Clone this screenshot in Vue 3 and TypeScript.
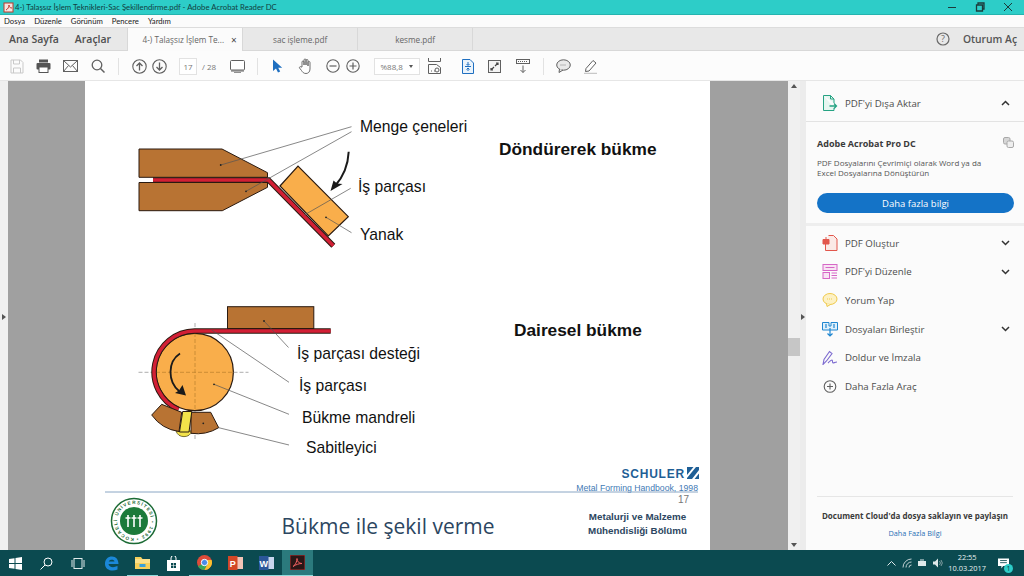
<template>
  <div class="app">
    <header class="title-bar">
      <svg class="pdf-mini" width="11" height="11" viewBox="0 0 11 11"><rect x="1" y="1" width="9" height="9" fill="#f4e4e0" stroke="#c0392b" stroke-width="1" /><path d="M3 8c2-1 3-3 3-5 0 2 1 3 3 3" fill="none" stroke="#c0392b" /></svg>
      <span class="title-text">4-) Talaşsız İşlem Teknikleri-Sac Şekillendirme.pdf - Adobe Acrobat Reader DC</span>
      <div class="win-controls">
        <svg width="10" height="10" viewBox="0 0 10 10"><path d="M1 5.500h8" stroke="#1c3b3b" /></svg>
        <svg width="10" height="10" viewBox="0 0 10 10"><path d="M1.500 3h6v6h-6zM3 3V1h6v6H7.500" fill="none" stroke="#1c3b3b" stroke-width="1.300" /></svg>
        <svg width="10" height="10" viewBox="0 0 10 10"><path d="M1 1l8 8M9 1l-8 8" stroke="#1c3b3b" /></svg>
      </div>
    </header>

    <nav class="menu-bar">
      <span v-for="item in menuItems" :key="item">{{ item }}</span>
    </nav>

    <div class="tab-bar">
      <a class="home-link first">Ana Sayfa</a>
      <a class="home-link">Araçlar</a>
      <div class="tab active">
        <span>4-) Talaşsız İşlem Te...</span>
        <span class="tab-close">×</span>
      </div>
      <div class="tab">sac işleme.pdf</div>
      <div class="tab">kesme.pdf</div>
      <div class="tab-actions">
        <svg width="14" height="14" viewBox="0 0 14 14"><circle cx="7" cy="7" r="6" fill="none" stroke="#6a6a6a" stroke-width="1.200" /><text x="7" y="10.200" text-anchor="middle" class="help-mark">?</text></svg>
        <span class="sign-in">Oturum Aç</span>
      </div>
    </div>

    <div class="toolbar">
      <div class="tb"><svg width="14" height="15" viewBox="0 0 14 15"><path d="M1 1h9.500l2.500 2.500V14H1z" fill="none" stroke="#c9c9c9" /><path d="M3.500 1v4h6V1M3.500 14V9h7v5" fill="none" stroke="#c9c9c9" /></svg></div>
      <div class="tb"><svg width="15" height="14" viewBox="0 0 15 14"><rect x="3" y="0.500" width="9" height="3" fill="#555" /><rect x="0.500" y="4" width="14" height="6.500" rx="1" fill="#555" /><rect x="3" y="8" width="9" height="5.500" fill="#fff" stroke="#555" /></svg></div>
      <div class="tb"><svg width="15" height="12" viewBox="0 0 15 12"><rect x="0.500" y="0.500" width="14" height="11" fill="none" stroke="#606060" /><path d="M0.500 0.500L7.500 7l7-6.500M0.500 11.500l5-6M14.500 11.500l-5-6" fill="none" stroke="#606060" /></svg></div>
      <div class="tb"><svg width="14" height="14" viewBox="0 0 14 14"><circle cx="6" cy="6" r="4.800" fill="none" stroke="#606060" stroke-width="1.300" /><path d="M9.500 9.500L13.500 13.500" stroke="#606060" stroke-width="1.500" /></svg></div>
      <div class="sep gap-a"></div>
      <div class="tb narrow gap-b"><svg width="15" height="15" viewBox="0 0 15 15"><circle cx="7.500" cy="7.500" r="6.700" fill="none" stroke="#606060" stroke-width="1.100" /><path d="M7.500 11.500V4M4.500 7l3-3 3 3" fill="none" stroke="#606060" stroke-width="1.300" /></svg></div>
      <div class="tb narrow"><svg width="15" height="15" viewBox="0 0 15 15"><circle cx="7.500" cy="7.500" r="6.700" fill="none" stroke="#606060" stroke-width="1.100" /><path d="M7.500 3.500V11M4.500 8l3 3 3-3" fill="none" stroke="#606060" stroke-width="1.300" /></svg></div>
      <div class="page-input">17</div>
      <span class="page-total">/ 28</span>
      <div class="tb gap-c"><svg width="15" height="13" viewBox="0 0 15 13"><rect x="0.500" y="0.500" width="14" height="9.500" rx="1" fill="#fff" stroke="#606060" /><path d="M1 10.500h13v1H1z" fill="#606060" /><path d="M4 12.500h7" stroke="#909090" /></svg></div>
      <div class="sep gap-d"></div>
      <div class="tb gap-e"><svg width="11" height="14" viewBox="0 0 11 14"><path d="M1 0.500v11.500l3-2.500 2 4 2.200-1-2-3.800h4z" fill="#1f6fc0" /></svg></div>
      <div class="tb gap-f"><svg width="15" height="16" viewBox="0 0 15 16"><path d="M4 9V4a1 1 0 0 1 2 0v3-5a1 1 0 0 1 2 0v5-4.500a1 1 0 0 1 2 0V8 4.500a1 1 0 0 1 2 0V11c0 3-2 4.500-4 4.500-2.500 0-3.500-1.500-4.500-3L1.500 10c-.5-1 .8-1.800 1.500-1z" fill="#fff" stroke="#606060" stroke-width="0.900" /></svg></div>
      <div class="tb narrow gap-g"><svg width="14" height="14" viewBox="0 0 14 14"><circle cx="7" cy="7" r="6.200" fill="none" stroke="#606060" stroke-width="1.100" /><path d="M3.500 7h7" stroke="#606060" stroke-width="1.200" /></svg></div>
      <div class="tb narrow"><svg width="14" height="14" viewBox="0 0 14 14"><circle cx="7" cy="7" r="6.200" fill="none" stroke="#606060" stroke-width="1.100" /><path d="M3.500 7h7M7 3.500v7" stroke="#606060" stroke-width="1.200" /></svg></div>
      <div class="zoom-box"><span>%88,8</span><i class="caret"></i></div>
      <div class="tb gap-h"><svg width="13" height="16" viewBox="0 0 13 16"><path d="M0.500 0v3.500h12V0" fill="none" stroke="#606060" /><path d="M0.500 15.500V6.500h8l4 3v6z" fill="none" stroke="#606060" /><path d="M3 13h1M6 13h1" stroke="#606060" /><circle cx="9" cy="12" r="2" fill="none" stroke="#606060" /></svg></div>
      <div class="tb gap-i"><svg width="12" height="15" viewBox="0 0 12 15"><path d="M0.500 0.500h7.500l3.500 3.500v10.500H0.500z" fill="#eaf3fb" stroke="#1f6fc0" /><path d="M6 3v3M6 9v3M3 7.500h6M4.500 5L6 6.500 7.500 5M4.500 10.500L6 9l1.500 1.500" fill="none" stroke="#1f6fc0" /></svg></div>
      <div class="tb"><svg width="13" height="13" viewBox="0 0 13 13"><rect x="0.500" y="0.500" width="12" height="12" fill="#f4f4f4" stroke="#606060" /><path d="M7 6l3-3M8 3h2v2M6 7l-3 3M3 8v2h2" fill="none" stroke="#444" stroke-width="1.200" /></svg></div>
      <div class="tb gap-j"><svg width="14" height="14" viewBox="0 0 14 14"><rect x="0.500" y="0.500" width="13" height="4" fill="none" stroke="#606060" /><path d="M2 2.500h10" stroke="#606060" stroke-dasharray="1 1" /><path d="M7 6.500v7M4.500 11L7 13.500 9.500 11" fill="none" stroke="#606060" /></svg></div>
      <div class="sep gap-k"></div>
      <div class="tb gap-l"><svg width="15" height="14" viewBox="0 0 15 14"><ellipse cx="7.500" cy="6" rx="6.800" ry="5.200" fill="#e9e9e9" stroke="#606060" /><path d="M3.500 10L3 13.500 7 11" fill="#e9e9e9" stroke="#606060" /><path d="M4.500 6h6" stroke="#808080" stroke-dasharray="1 1" /></svg></div>
      <div class="tb"><svg width="15" height="15" viewBox="0 0 15 15"><path d="M3 9.500L10 1.500l3 2.500-7 8-3.500.5z" fill="#fff" stroke="#606060" /><path d="M1 14.500h13" stroke="#c8c8c8" stroke-width="1.500" /></svg></div>
    </div>

    <main class="workspace">
      <div class="side-rail"><i class="arrow-right"></i></div>

      <section class="viewer">
        <div class="page">
          <!-- page content sits on a free canvas, the coordinates are the screen ones -->
          <svg class="page-art" width="625" height="469" viewBox="85 81 625 469">
            <defs>
              <path id="seal-ring" d="M134 538a17 17 0 1 1 .1 0" />
            </defs>

            <!-- Döndürerek bükme -->
            <path class="steel" d="M139 149H222L267.500 172.700V177.300H139z" />
            <path class="steel" d="M139 182.500H267.500V187.300L222.300 210.700H139z" />
            <path d="M153 180H268.500L333.300 245.800" fill="none" stroke="#2a1a10" stroke-width="5.500" />
            <path d="M153 180H268.500L333.300 245.800" fill="none" stroke="#d21f35" stroke-width="3.500" />
            <path class="wood" d="M280 186L298 166L348.300 216.700L328.300 236z" />
            <path class="leader" d="M220.700 165L351.500 126.700M246 191.300L351.500 131.700M304.300 215L350.700 188.300M326 217.300L351.500 232.700" />
            <circle class="dot" cx="220.700" cy="165" r="0.900" />
            <circle class="dot" cx="246" cy="191.300" r="0.900" />
            <circle class="dot" cx="326" cy="217.300" r="0.900" />
            <path d="M348.700 151.700C348 166 343 177 335 186" fill="none" stroke="#1a1a1a" stroke-width="2" />
            <path d="M330.500 191L333.500 180.500L337 183.500L342.500 184z" fill="#1a1a1a" />

            <text class="label" x="360" y="132">Menge çeneleri</text>
            <text class="label" x="358" y="191.500">İş parçası</text>
            <text class="label" x="360" y="239.500">Yanak</text>
            <text class="label heading" x="499" y="155">Döndürerek bükme</text>

            <!-- Dairesel bükme -->
            <rect class="steel" x="227.500" y="306.700" width="86.300" height="21.800" />
            <circle class="wood" cx="194.700" cy="372" r="38.700" />
            <path d="M138.500 372.300H156M233.500 372.300H248.500M195 323V333M195 411V441" stroke="#999" stroke-width="0.800" stroke-dasharray="4 2" />
            <path d="M156 372.300H233.500M195 333V411" stroke="#c08530" stroke-width="0.800" stroke-dasharray="4 2" />
            <path d="M330.700 331H194.700A41 41 0 0 0 178.500 409.500" fill="none" stroke="#2a1a10" stroke-width="5.500" />
            <path d="M330.700 331H194.700A41 41 0 0 0 178.500 409.500" fill="none" stroke="#d21f35" stroke-width="3.500" />
            <path d="M176 431a8.500 8.500 0 0 0 16 0z" fill="#f2e24a" stroke="#5a5320" stroke-width="0.800" />
            <path class="steel" d="M151.700 415L161.700 404.300L181.700 412.300L179 431.500A40 40 0 0 1 151.700 415z" />
            <path class="steel" d="M191 412.300L210.700 412.300L218.700 427.700A42 42 0 0 1 191 433.300z" />
            <path d="M182.700 411.500H191.800L189 432H179.500z" fill="#f2e24a" stroke="#2a1a10" stroke-width="1" />
            <path class="leader" d="M264 321L288.500 347.500M211.700 330L289 382.300M214 384.300L289 414.300M218.700 427.700L289 445" />
            <circle class="dot" cx="264" cy="321" r="0.900" />
            <circle class="dot" cx="214" cy="384.300" r="0.900" />
            <circle class="dot" cx="203.300" cy="423.300" r="0.900" />
            <path d="M180 353.500C167 362 168 382 179 391" fill="none" stroke="#1a1a1a" stroke-width="1.800" />
            <path d="M186 395.500L175 393L179 390.500L182.500 385z" fill="#1a1a1a" />

            <text class="label" x="297" y="359">İş parçası desteği</text>
            <text class="label" x="299" y="391">İş parçası</text>
            <text class="label" x="302" y="423">Bükme mandreli</text>
            <text class="label" x="306" y="452.500">Sabitleyici</text>
            <text class="label heading" x="514" y="336">Dairesel bükme</text>

            <!-- alt bilgi -->
            <text class="schuler" x="685" y="478" text-anchor="end">SCHULER</text>
            <path d="M687 467h12v12h-12z" fill="#1f5f96" />
            <path d="M687 478l9-11h-2.500l-6.500 8zM699 470l-7 9h2.500l4.500-5.500z" fill="#fff" />
            <text class="source" x="698" y="491" text-anchor="end">Metal Forming Handbook, 1998</text>
            <path d="M105 492H698" stroke="#8aa6c4" stroke-width="1" />
            <text class="page-no" x="689" y="503" text-anchor="end">17</text>

            <circle cx="134" cy="521" r="22.500" fill="#fff" stroke="#1c6b35" stroke-width="1.500" />
            <circle cx="134" cy="521" r="14" fill="#1c7a3a" />
            <text class="seal-text" textLength="104"><textPath href="#seal-ring">KOCAELİ ÜNİVERSİTESİ • 1992 •</textPath></text>
            <path d="M128 515v12M134 515v12M140 515v12M125.500 518l5 0M131.500 518l5 0M137.500 518l5 0" stroke="#fff" stroke-width="1.600" />

            <text class="slide-title" x="388" y="534" text-anchor="middle">Bükme ile şekil verme</text>
            <text class="dept" x="637.500" y="520" text-anchor="middle">Metalurji ve Malzeme</text>
            <text class="dept" x="637.500" y="534" text-anchor="middle">Mühendisliği Bölümü</text>
          </svg>
        </div>
      </section>

      <div class="scrollbar">
        <i class="sb-up"></i>
        <div class="sb-thumb"></div>
        <i class="sb-down"></i>
      </div>
      <div class="side-rail right"><i class="arrow-right"></i></div>

      <aside class="tools-pane">
        <div class="pane-row head">
          <svg class="row-icon" width="15" height="16" viewBox="0 0 15 16"><path d="M1 .5h7l3.500 3.500v4M11.500 13v2.500H1V.5" fill="#e6f6f0" stroke="#26a383" /><path d="M8 .5V4h3.500" fill="none" stroke="#26a383" /><path d="M7 11h7M11.500 8.500L14 11l-2.500 2.500" fill="none" stroke="#26a383" stroke-width="1.300" /></svg>
          <span>PDF'yi Dışa Aktar</span>
          <svg class="chev" width="9" height="6" viewBox="0 0 9 6"><path d="M1 5l3.500-3.500L8 5" fill="none" stroke="#333" stroke-width="1.500" /></svg>
        </div>
        <div class="promo">
          <div class="promo-head">
            <strong>Adobe Acrobat Pro DC</strong>
            <svg width="11" height="11" viewBox="0 0 11 11"><rect x="0.500" y="0.500" width="6.500" height="6.500" rx="1.500" fill="#d6d6d6" stroke="#a8a8a8" /><rect x="4" y="4" width="6.500" height="6.500" rx="1.500" fill="#eee" stroke="#a8a8a8" /></svg>
          </div>
          <p>PDF Dosyalarını Çevrimiçi olarak Word ya da Excel Dosyalarına Dönüştürün</p>
          <button class="promo-btn">Daha fazla bilgi</button>
        </div>
        <div class="tool-list">
          <div class="pane-row">
            <svg class="row-icon" width="15" height="16" viewBox="0 0 15 16"><path d="M6 .5h5l3.500 3.500v11.500H3V9" fill="#fbe9e6" stroke="#e2574c" /><path d="M.5 4.500h6V9h-6zM3.500 2v2.500" fill="#e2574c" stroke="#e2574c" /></svg>
            <span>PDF Oluştur</span>
            <svg class="chev" width="9" height="6" viewBox="0 0 9 6"><path d="M1 1l3.500 3.500L8 1" fill="none" stroke="#333" stroke-width="1.500" /></svg>
          </div>
          <div class="pane-row">
            <svg class="row-icon" width="15" height="15" viewBox="0 0 15 15"><rect x="0.500" y="0.500" width="14" height="6" fill="#f8e4f4" stroke="#d667c6" /><rect x="0.500" y="8.500" width="6.500" height="6" fill="#f8e4f4" stroke="#d667c6" /><path d="M9 9h5.500M9 11.500h5.500M9 14h5.500M3 3.500h9" stroke="#d667c6" /></svg>
            <span>PDF'yi Düzenle</span>
            <svg class="chev" width="9" height="6" viewBox="0 0 9 6"><path d="M1 1l3.500 3.500L8 1" fill="none" stroke="#333" stroke-width="1.500" /></svg>
          </div>
          <div class="pane-row">
            <svg class="row-icon" width="15" height="14" viewBox="0 0 15 14"><ellipse cx="7.500" cy="6" rx="7" ry="5.500" fill="#fdf1c4" stroke="#efc94c" /><path d="M4 10.500L4.500 13.500 8 11.500" fill="#fdf1c4" stroke="#efc94c" /><path d="M4.500 6h6" stroke="#efc94c" stroke-dasharray="1 1" /></svg>
            <span>Yorum Yap</span>
          </div>
          <div class="pane-row">
            <svg class="row-icon" width="16" height="15" viewBox="0 0 16 15"><path d="M.5.500h6.500v3.500H9V.5h6.500v7.500H.5z" fill="#dff0fb" stroke="#1f86d0" /><path d="M8 6v8M5.500 11.500L8 14l2.500-2.500M4 2v4M12 2v4" fill="none" stroke="#1f86d0" stroke-width="1.200" /></svg>
            <span>Dosyaları Birleştir</span>
            <svg class="chev" width="9" height="6" viewBox="0 0 9 6"><path d="M1 1l3.500 3.500L8 1" fill="none" stroke="#333" stroke-width="1.500" /></svg>
          </div>
          <div class="pane-row">
            <svg class="row-icon" width="16" height="15" viewBox="0 0 16 15"><path d="M1 14.500L2 9.500 7.500 1.500l2.500 2L4.500 11zM6 13c2-2 3-3 4-3s0 3 1 3 2-1 4-1" fill="none" stroke="#7d6bd0" stroke-width="1.100" /></svg>
            <span>Doldur ve İmzala</span>
          </div>
          <div class="pane-row">
            <svg class="row-icon" width="13" height="13" viewBox="0 0 13 13"><circle cx="6.500" cy="6.500" r="5.800" fill="none" stroke="#606060" stroke-width="1.100" /><path d="M3.500 6.500h6M6.500 3.500v6" stroke="#606060" stroke-width="1.100" /></svg>
            <span>Daha Fazla Araç</span>
          </div>
        </div>
        <div class="pane-footer">
          <strong>Document Cloud'da dosya saklayın ve paylaşın</strong>
          <a>Daha Fazla Bilgi</a>
        </div>
      </aside>
    </main>

    <footer class="taskbar">
      <div class="task-btn first"><svg width="13" height="13" viewBox="0 0 13 13"><path d="M0 2l5.500-.8V6H0zM6.500 1L13 0v6H6.500zM0 7h5.500v4.800L0 11zM6.500 7H13v6l-6.500-1z" fill="#fff" /></svg></div>
      <div class="task-btn"><svg width="13" height="13" viewBox="0 0 13 13"><circle cx="8" cy="5" r="4" fill="none" stroke="#fff" /><path d="M5 8l-4.500 4.500" stroke="#fff" /></svg></div>
      <div class="task-btn"><svg width="14" height="11" viewBox="0 0 14 11"><rect x="3" y="0.500" width="8" height="10" fill="none" stroke="#dfe9ea" /><path d="M1 2v7M13 2v7" stroke="#dfe9ea" /></svg></div>
      <div class="task-btn wide"><svg width="15" height="15" viewBox="0 0 15 15"><path d="M1 8C1 3 4 .5 8 .5c4 0 6.500 3 6.500 7.500H4.500c.3 3 4.500 4.200 9 2v3.500C8 16 1 14 1 8zM4.700 5.500h5.800C10.300 3 5.500 3 4.700 5.500z" fill="#1b88d8" /></svg></div>
      <div class="task-btn running"><svg width="15" height="13" viewBox="0 0 15 13"><path d="M0 1h6l1.500 2H15v10H0z" fill="#f6cf5a" /><rect x="0" y="3" width="15" height="4" fill="#fbe08a" /><rect x="4.500" y="8" width="6" height="3" fill="#3aa0d8" /></svg></div>
      <div class="task-btn"><svg width="13" height="15" viewBox="0 0 13 15"><path d="M0 4h13v11H0z" fill="#fff" /><path d="M4 4V2a2.500 2.500 0 0 1 5 0v2" fill="none" stroke="#fff" /><path d="M4 7h2.200v2.200H4zM6.800 7H9v2.200H6.800zM4 9.800h2.200V12H4zM6.800 9.800H9V12H6.800z" fill="#0b4a50" /></svg></div>
      <div class="task-btn running"><svg width="15" height="15" viewBox="0 0 15 15"><circle cx="7.500" cy="7.500" r="7.500" fill="#dd4b39" /><path d="M7.500 7.500L1 11.200A7.500 7.500 0 0 0 7.500 15L11 8z" fill="#3aa757" /><path d="M7.500 7.500L11 8l-3.500 7A7.500 7.500 0 0 0 14.600 5H7.500z" fill="#fbc02d" /><circle cx="7.500" cy="7.500" r="3.200" fill="#4a8be8" stroke="#fff" /></svg></div>
      <div class="task-btn running"><svg width="15" height="14" viewBox="0 0 15 14"><rect x="6" y="1" width="9" height="12" fill="#f3c4b6" /><rect x="0" y="0" width="9.500" height="14" fill="#d24726" /><text x="4.800" y="10.500" text-anchor="middle" class="app-mark">P</text></svg></div>
      <div class="task-btn running"><svg width="15" height="14" viewBox="0 0 15 14"><rect x="6" y="1" width="9" height="12" fill="#c7d6ee" /><rect x="0" y="0" width="9.500" height="14" fill="#2b579a" /><text x="4.800" y="10.500" text-anchor="middle" class="app-mark">W</text></svg></div>
      <div class="task-btn running active"><svg width="15" height="15" viewBox="0 0 15 15"><rect width="15" height="15" fill="#2a1616" stroke="#b03030" /><path d="M3 11.500c2.500-1.500 4-5 4-8 0 3 2 5 5 5-3 0-6 1-9 3z" fill="none" stroke="#f06060" /></svg></div>
      <div class="tray">
        <svg width="9" height="5" viewBox="0 0 9 5"><path d="M.5 4.500l4-4 4 4" fill="none" stroke="#dfe9ea" /></svg>
        <svg width="10" height="10" viewBox="0 0 10 10"><path d="M1 9.500a8.500 8.500 0 0 1 8.500-8.500M4 9.500a5.500 5.500 0 0 1 5.500-5.500M7 9.500A2.500 2.500 0 0 1 9.500 7" fill="none" stroke="#c3d2d4" /></svg>
        <svg width="10" height="8" viewBox="0 0 10 8"><rect x="1" y="2" width="8" height="5" fill="#dfe9ea" /><path d="M3 1h4" stroke="#dfe9ea" /></svg>
        <svg width="10" height="10" viewBox="0 0 10 10"><path d="M0 3.500h2l3-3v9l-3-3H0z" fill="#dfe9ea" /><path d="M6.500 3a3 3 0 0 1 0 4M8 2a4.500 4.500 0 0 1 0 6" fill="none" stroke="#9fb4b6" stroke-width="0.800" /></svg>
        <div class="clock"><span>22:55</span><span>10.03.2017</span></div>
        <div class="notify">
          <svg width="11" height="11" viewBox="0 0 13 12"><path d="M0 0h13v9H6l-2 3V9H0z" fill="#fff" /><path d="M2.500 2.500h8M2.500 5h8" stroke="#0b4a50" /></svg>
          <span class="badge">1</span>
        </div>
      </div>
    </footer>
  </div>
</template>

<script setup lang="ts">
const menuItems: string[] = ['Dosya', 'Düzenle', 'Görünüm', 'Pencere', 'Yardım']
</script>

<style>
html,
body {
  margin: 0;
  overflow: hidden;
}
</style>

<style scoped>
.app {
  width: 1024px;
  height: 576px;
  display: flex;
  flex-direction: column;
  font-family: "Open Sans", "Noto Sans", sans-serif;
  color: #4d4d4d;
  overflow: hidden;
}

.title-bar {
  height: 15px;
  flex: none;
  display: flex;
  align-items: center;
  box-sizing: border-box;
  background: #2dcdc8;
  border-bottom: 1px solid #24b3ae;
  color: #12403f;
  font-family: Lato, sans-serif;
  font-size: 7.750px;
}

.pdf-mini {
  margin-left: 3px;
  margin-right: 1px;
}

.win-controls {
  margin-left: auto;
  display: flex;
  gap: 18px;
  padding-right: 11px;
}

.menu-bar {
  height: 12px;
  flex: none;
  display: flex;
  align-items: center;
  gap: 9px;
  padding-left: 4px;
  background: #fbfbfb;
  font-family: Lato, sans-serif;
  font-size: 7.700px;
  color: #222;
}

.tab-bar {
  height: 24px;
  flex: none;
  display: flex;
  align-items: stretch;
  box-sizing: border-box;
  background: #e8e8e8;
  border-top: 1px solid #dcdcdc;
  border-bottom: 1px solid #d8d8d8;
  font-size: 8.200px;
  color: #666;
}

.home-link {
  display: flex;
  align-items: center;
  font-size: 10.500px;
  font-weight: 600;
  color: #4f4f4f;
  margin-left: 16px;
}

.home-link.first {
  margin-left: 9px;
}

.tab {
  width: 115px;
  display: flex;
  align-items: center;
  justify-content: center;
  box-sizing: border-box;
  border-right: 1px solid #d8d8d8;
}

.tab.active {
  background: #fbfbfb;
  margin-left: 16px;
  margin-bottom: -1px;
  gap: 7px;
  width: 116px;
  padding-left: 9px;
  border-left: 1px solid #d8d8d8;
}

.tab-close {
  font-size: 10px;
  color: #444;
}

.tab-actions {
  margin-left: auto;
  display: flex;
  align-items: center;
  gap: 13px;
  padding-right: 7px;
}

.help-mark {
  font-size: 9px;
  fill: #6a6a6a;
}

.sign-in {
  font-size: 10.300px;
  font-weight: 600;
  color: #555;
}

.toolbar {
  height: 30px;
  flex: none;
  display: flex;
  align-items: center;
  box-sizing: border-box;
  padding: 1px 0 0 3px;
  background: #fcfcfc;
  border-bottom: 1px solid #e6e6e6;
  font-size: 8px;
  color: #777;
}

.tb {
  width: 27px;
  flex: none;
  display: flex;
  align-items: center;
  justify-content: center;
}

.tb.narrow {
  width: 20px;
}

.sep {
  width: 1px;
  height: 17px;
  flex: none;
  background: #e2e2e2;
}

.gap-a { margin-left: 7px; }
.gap-b { margin-left: 10px; }
.gap-c { margin-left: 5.500px; }
.gap-d { margin-left: 6.500px; }
.gap-e { margin-left: 6px; }
.gap-f { margin-left: 1px; }
.gap-g { margin-left: 3.500px; }
.gap-h { margin-left: 1.500px; }
.gap-i { margin-left: 6px; }
.gap-j { margin-left: 1px; }
.gap-k { margin-left: 6.500px; }
.gap-l { margin-left: 6px; }

.page-input {
  width: 18px;
  height: 17px;
  margin-left: 10px;
  border: 1px solid #e2e2e2;
  box-sizing: border-box;
  background: #fff;
  display: flex;
  align-items: center;
  justify-content: center;
}

.page-total {
  width: 16px;
  margin-left: 5px;
}

.zoom-box {
  width: 46px;
  height: 17px;
  margin-left: 11px;
  border: 1px solid #e2e2e2;
  box-sizing: border-box;
  background: #fff;
  display: flex;
  align-items: center;
  justify-content: space-between;
  padding: 0 6px;
}

.caret {
  width: 0;
  height: 0;
  border-left: 2.500px solid transparent;
  border-right: 2.500px solid transparent;
  border-top: 3px solid #555;
}

.workspace {
  flex: 1;
  min-height: 0;
  display: flex;
}

.side-rail {
  width: 8px;
  flex: none;
  background: #f0f0f0;
  display: flex;
  align-items: center;
  justify-content: center;
}

.side-rail.right {
  width: 6px;
  background: #ececec;
}

.arrow-right {
  width: 0;
  height: 0;
  border-top: 3px solid transparent;
  border-bottom: 3px solid transparent;
  border-left: 4px solid #555;
  margin-top: 2px;
}

.viewer {
  width: 780px;
  flex: none;
  background: #a0a0a0;
  padding-left: 77px;
  box-sizing: border-box;
  overflow: hidden;
}

.page {
  width: 625px;
  height: 469px;
  background: #fff;
}

.page-art {
  display: block;
}

.steel {
  fill: #b87333;
  stroke: #2a1a10;
  stroke-width: 1;
}

.wood {
  fill: #f9ae4b;
  stroke: #2a1a10;
  stroke-width: 1.200;
}

.leader {
  fill: none;
  stroke: #555;
  stroke-width: 0.700;
}

.dot {
  fill: #222;
}

.label {
  font-family: "Liberation Sans", Arial, sans-serif;
  font-size: 15.700px;
  fill: #111;
}

.heading {
  font-weight: 700;
  font-size: 17.300px;
}

.schuler {
  font-family: "Liberation Sans", Arial, sans-serif;
  font-weight: 700;
  font-size: 12px;
  letter-spacing: 0.800px;
  fill: #1f5f96;
}

.source {
  font-family: "Liberation Sans", Arial, sans-serif;
  font-size: 8.700px;
  fill: #3f7ab5;
}

.page-no {
  font-family: "Liberation Sans", Arial, sans-serif;
  font-size: 10px;
  fill: #777;
}

.seal-text {
  font-family: "Liberation Sans", Arial, sans-serif;
  font-size: 4.600px;
  font-weight: 700;
  fill: #1c6b35;
}

.slide-title {
  font-family: "Open Sans", sans-serif;
  font-size: 21px;
  fill: #2c4661;
}

.dept {
  font-family: "Liberation Sans", Arial, sans-serif;
  font-weight: 700;
  font-size: 9.800px;
  fill: #2c4661;
}

.scrollbar {
  width: 12px;
  flex: none;
  background: #f0f0f0;
  position: relative;
}

.sb-thumb {
  position: absolute;
  top: 257px;
  left: 0;
  width: 12px;
  height: 18px;
  background: #c6c6c6;
}

.sb-up,
.sb-down {
  position: absolute;
  left: 3px;
  width: 0;
  height: 0;
  border-left: 3px solid transparent;
  border-right: 3px solid transparent;
}

.sb-up {
  top: 3px;
  border-bottom: 4px solid #555;
}

.sb-down {
  bottom: 3px;
  border-top: 4px solid #555;
}

.tools-pane {
  flex: 1;
  min-width: 0;
  background: #fbfbfb;
  display: flex;
  flex-direction: column;
  font-size: 9.700px;
}

.pane-row {
  height: 28.600px;
  display: flex;
  align-items: center;
  box-sizing: border-box;
  padding: 0 14px 0 0;
}

.pane-row.head {
  height: 41px;
  padding-top: 4px;
  border-bottom: 1px solid #e3e3e3;
}

.row-icon {
  width: 16px;
  margin-left: 16px;
  margin-right: 7px;
  flex: none;
}

.chev {
  margin-left: auto;
}

.promo {
  padding: 15px 10px 10px 11px;
  border-bottom: 3px solid #eeeeee;
}

.promo-head {
  display: flex;
  justify-content: space-between;
  align-items: flex-start;
}

.promo-head strong {
  font-size: 9px;
  font-weight: 700;
  color: #3a3a3a;
}

.promo p {
  margin: 8px 0 15px;
  width: 176px;
  font-size: 8px;
  line-height: 10px;
  color: #555;
}

.promo-btn {
  display: block;
  width: 197px;
  height: 20px;
  border: 0;
  border-radius: 10px;
  background: #1473c7;
  color: #fff;
  font-family: inherit;
  font-size: 9.500px;
}

.tool-list {
  padding-top: 3px;
}

.pane-footer {
  margin: auto 11px 0;
  padding: 13px 0 12px;
  border-top: 1px solid #e6e6e6;
  display: flex;
  flex-direction: column;
  align-items: center;
  gap: 7px;
  font-size: 8px;
}

.pane-footer strong {
  color: #3a3a3a;
  white-space: nowrap;
}

.pane-footer a {
  font-size: 7.300px;
  color: #2a6fb5;
}

.taskbar {
  height: 26px;
  flex: none;
  display: flex;
  align-items: center;
  background: #0b4a50;
  color: #e8f0f0;
}

.task-btn {
  width: 31px;
  height: 26px;
  flex: none;
  display: flex;
  align-items: center;
  justify-content: center;
  box-sizing: border-box;
}

.task-btn.wide {
  margin-left: 2.500px;
}

.task-btn.running {
  border-bottom: 1px solid #8fdcdc;
}

.task-btn.active {
  background: #2b7a7d;
}

.app-mark {
  font-family: "Liberation Sans", Arial, sans-serif;
  font-size: 9px;
  font-weight: 700;
  fill: #fff;
}

.tray {
  margin-left: auto;
  display: flex;
  align-items: center;
  gap: 5.500px;
  padding-right: 15px;
}

.clock {
  display: flex;
  flex-direction: column;
  align-items: center;
  font-size: 7.400px;
  line-height: 11.500px;
}

.notify {
  position: relative;
  margin-left: 6.500px;
  display: flex;
}

.badge {
  position: absolute;
  right: -4px;
  bottom: -4px;
  width: 9px;
  height: 9px;
  border-radius: 50%;
  background: #2dcdc8;
  color: #083a3e;
  font-size: 7px;
  line-height: 9px;
  text-align: center;
}
</style>
